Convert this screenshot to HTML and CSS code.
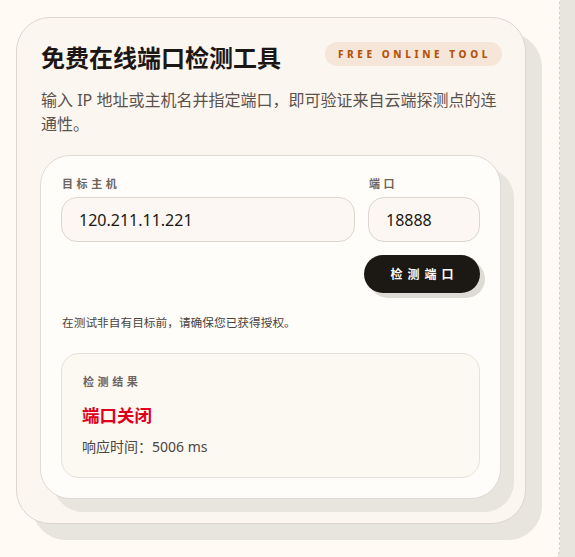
FILE: index.html
```html
<!DOCTYPE html>
<html lang="zh-CN">
<head>
<meta charset="utf-8">
<title>免费在线端口检测工具</title>
<link rel="stylesheet" href="styles.css">
</head>
<body>
<div class="frame">
  <section class="card">
    <header class="head">
      <h1 class="title">免费在线端口检测工具</h1>
      <span class="badge">FREE ONLINE TOOL</span>
    </header>
    <p class="lead">输入 IP 地址或主机名并指定端口，即可验证来自云端探测点的连通性。</p>
    <div class="panel">
      <div class="fields">
        <label class="field">
          <span class="label">目标主机</span>
          <input class="input" type="text" value="120.211.11.221">
        </label>
        <label class="field">
          <span class="label">端口</span>
          <input class="input" type="text" value="18888">
        </label>
      </div>
      <div class="actions">
        <button class="btn" type="button">检测端口</button>
      </div>
      <p class="note">在测试非自有目标前，请确保您已获得授权。</p>
      <div class="result">
        <div class="label">检测结果</div>
        <div class="status">端口关闭</div>
        <div class="time">响应时间：5006 ms</div>
      </div>
    </div>
  </section>
</div>
</body>
</html>
```
FILE: styles.css
```css
* { box-sizing: border-box; }
html, body {
  margin: 0;
  background: #fffbf4;
  overflow: hidden;
}
body {
  font-family: "Noto Sans", "Noto Sans CJK SC", sans-serif;
  color: #1f1a17;
}
.frame {
  width: 560px;
  height: 600px;
  margin-top: -24px;
  padding: 41px 0 0 16px;
  border-right: 1px dashed #d6cfc6;
  border-bottom: 1px dashed #d6cfc6;
  border-radius: 0 0 30px 0;
  box-shadow: 16px 16px 0 #e8e4de;
  background: #fffbf4;
}
.card {
  width: 510px;
  height: 507px;
  padding: 24px 24px 24px 23px;
  background: #fcf6f1;
  border: 1px solid #dcd6cf;
  border-radius: 34px;
  box-shadow: 16px 16px 0 #e8e4de;
}
.head {
  display: flex;
  justify-content: space-between;
  align-items: flex-start;
  padding-left: 1px;
}
.title {
  margin: 0;
  font-size: 24px;
  line-height: 32px;
  font-weight: 700;
  color: #1c1714;
}
.badge {
  height: 24px;
  line-height: 24px;
  padding: 0 11px 0 13px;
  border-radius: 12px;
  background: #f6e6d9;
  color: #b3540d;
  font-size: 10px;
  font-weight: 800;
  letter-spacing: 3.6px;
  margin-right: -1px;
}
.lead {
  margin: 14px 0 0;
  padding-left: 1px;
  font-size: 16px;
  line-height: 24px;
  color: #5a524c;
}
.panel {
  margin-top: 19px;
  padding: 20px;
  background: #fffdf9;
  border: 1px solid #e0dad3;
  border-radius: 30px;
  box-shadow: 13px 13px 0 #e8e4de;
}
.fields {
  display: grid;
  grid-template-columns: 1fr 112px;
  gap: 13px;
}
.field {
  display: flex;
  flex-direction: column;
  gap: 5px;
}
.label {
  font-size: 11px;
  line-height: 16px;
  font-weight: 700;
  letter-spacing: 3.6px;
  color: #6d645d;
  padding-left: 1px;
}
.input {
  height: 45px;
  padding: 0 17px;
  border: 1px solid #ddd5ce;
  border-radius: 16px;
  background: #fcf7f2;
  font-family: "Noto Sans", "Noto Sans CJK SC", sans-serif;
  font-size: 16px;
  color: #1a1715;
  outline: none;
  width: 100%;
}
.actions {
  display: flex;
  justify-content: flex-end;
  margin-top: 13px;
}
.btn {
  width: 116px;
  height: 38px;
  border: 0;
  border-radius: 19px;
  background: #1c1814;
  color: #ffffff;
  font-family: "Noto Sans", "Noto Sans CJK SC", sans-serif;
  font-size: 12px;
  font-weight: 700;
  letter-spacing: 5px;
  padding: 0 0 0 5px;
  box-shadow: 5px 5px 0 #dedad4;
}
.note {
  margin: 20px 0 0;
  padding-left: 1px;
  font-size: 11.7px;
  line-height: 18px;
  color: #4a433e;
}
.result {
  margin-top: 22px;
  padding: 20px 20px;
  background: #fcf8f2;
  border: 1px solid #e6e0d8;
  border-radius: 18px;
}
.status {
  margin-top: 12px;
  font-size: 17.5px;
  line-height: 26px;
  font-weight: 700;
  color: #e0001b;
}
.time {
  margin-top: 9px;
  font-size: 14px;
  line-height: 20px;
  color: #4b4540;
}
```
